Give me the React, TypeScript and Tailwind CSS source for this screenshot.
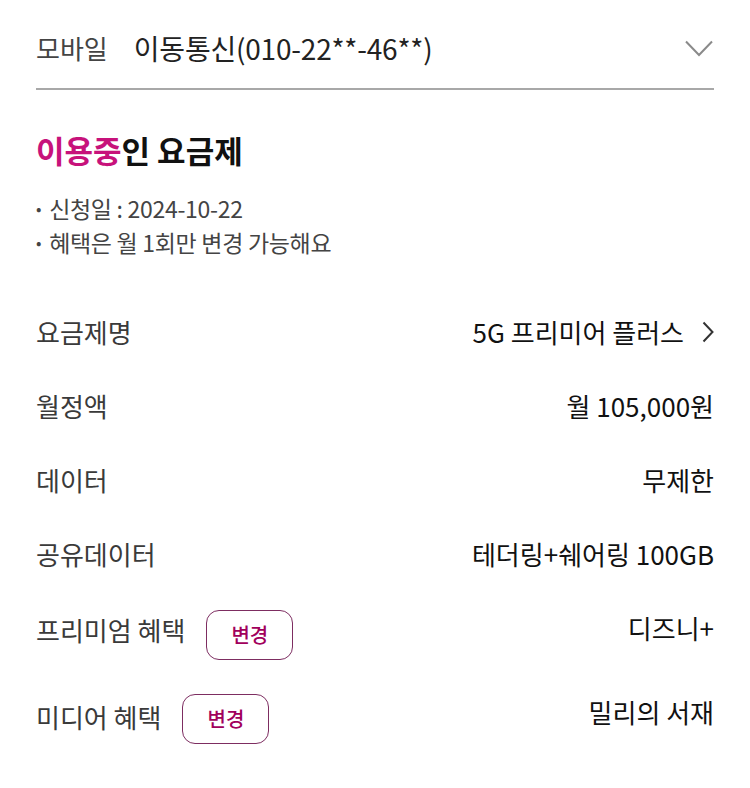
import React from 'react';

const FONT = { fontFamily: '"Noto Sans CJK KR", "Noto Sans", sans-serif' };

interface PlanRow {
  label: string;
  value: string;
  link?: boolean;
}

const PLAN_ROWS: PlanRow[] = [
  { label: '요금제명', value: '5G 프리미어 플러스', link: true },
  { label: '월정액', value: '월 105,000원' },
  { label: '데이터', value: '무제한' },
  { label: '공유데이터', value: '테더링+쉐어링 100GB' },
];

const ChangeButton: React.FC = () => (
  <button className="flex h-[50px] w-[87px] items-center justify-center rounded-[13px] border-[1.5px] border-[#7d2d61] bg-white text-[20px] font-medium leading-none text-[#a1005c]">
    변경
  </button>
);

const App: React.FC = () => {
  return (
    <div className="min-h-[788px] w-[750px] bg-white px-[36px]" style={FONT}>
      {/* 회선 선택 */}
      <div className="flex h-[88px] items-center justify-between pt-[8px]">
        <div className="flex items-center leading-[36px]">
          <span className="text-[26px] text-[#444]">모바일</span>
          <span className="ml-[26px] text-[28px] tracking-[-0.2px] text-[#222]">이동통신(010-22**-46**)</span>
        </div>
        <svg width="28" height="17" viewBox="0 0 28 17" className="mr-[1px]">
          <path d="M1 1.5 L14 15 L27 1.5" fill="none" stroke="#8a8a8a" strokeWidth="2" />
        </svg>
      </div>
      <div className="h-[2px] bg-[#a8a8a8]" />

      {/* 이용중인 요금제 */}
      <h2 className="mt-[40px] text-[31px] font-bold leading-[40px] text-[#111]">
        <span className="text-[#c7127b]">이용중</span>인 요금제
      </h2>
      <ul className="mt-[21px] text-[23px] leading-[34px] tracking-[-0.3px] text-[#444]">
        <li className="flex items-center">
          <span className="mr-[8px] text-[16px]">•</span>신청일 : 2024-10-22
        </li>
        <li className="flex items-center">
          <span className="mr-[8px] text-[16px]">•</span>혜택은 월 1회만 변경 가능해요
        </li>
      </ul>

      <div className="mt-[36px]">
        {PLAN_ROWS.map(row => (
          <div key={row.label} className="flex h-[74px] items-center justify-between text-[26px] leading-[36px]">
            <span className="text-[#3a3a3a]">{row.label}</span>
            <span className="flex items-center text-[#111]">
              {row.value}
              {row.link && (
                <svg width="12" height="22" viewBox="0 0 12 22" className="ml-[18px]">
                  <path d="M1.5 1.5 L10.5 11 L1.5 20.5" fill="none" stroke="#333" strokeWidth="2" />
                </svg>
              )}
            </span>
          </div>
        ))}

        <div className="flex h-[84px] items-start justify-between text-[26px] leading-[36px]">
          <div className="mt-[19px] flex items-center">
            <span className="mb-[10px] text-[#3a3a3a]">프리미엄 혜택</span>
            <span className="ml-[21px]"><ChangeButton /></span>
          </div>
          <span className="mt-[19px] text-[#111]">디즈니+</span>
        </div>

        <div className="flex h-[88px] items-start justify-between text-[26px] leading-[36px]">
          <div className="mt-[19px] flex items-center">
            <span className="mb-[4px] text-[#3a3a3a]">미디어 혜택</span>
            <span className="ml-[21px]"><ChangeButton /></span>
          </div>
          <span className="mt-[19px] text-[#111]">밀리의 서재</span>
        </div>
      </div>
    </div>
  );
};

export default App;
